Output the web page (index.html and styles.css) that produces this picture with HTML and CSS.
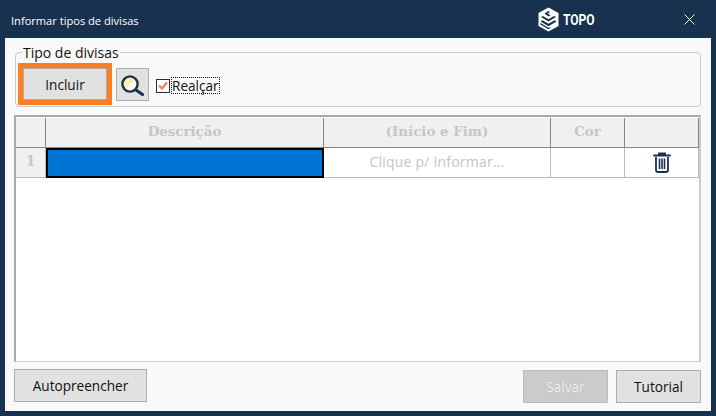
FILE: index.html
```html
<!DOCTYPE html>
<html lang="pt">
<head>
<meta charset="utf-8">
<title>Informar tipos de divisas</title>
<link rel="stylesheet" href="styles.css">
</head>
<body>
<div class="window">
  <header class="titlebar">
    <span class="title">Informar tipos de divisas</span>
    <div class="logo">
      <svg class="logo-mark" width="21" height="25" viewBox="0 0 21 25" aria-hidden="true">
        <path d="M10.5 0.5 L20.5 6 V19 L10.5 24.5 L0.5 19 V6 Z" fill="#fff"/>
        <path d="M10.5 4 L6.5 6.5 L10.5 9.5 L12.5 8.3 L9.8 6.6 L11.8 5.2 Z" fill="#17314f"/>
        <path d="M3 10 L10.5 14.5 L18 10 L16 8.9 L10.5 12.2 L5 8.9 Z" fill="#17314f"/>
        <path d="M4.5 13.3 L2.5 14.4 L10.5 19.2 L18.5 14.4 L16.5 13.3 L10.5 16.8 Z" fill="#17314f"/>
        <path d="M2 17.2 L10.5 22.2 L13.5 20.4 L10.5 20.8 L2.5 16.1 Z" fill="#17314f"/>
      </svg>
      <span class="logo-text">TOPO</span>
    </div>
    <svg class="close" width="11" height="11" viewBox="0 0 11 11" aria-hidden="true">
      <path d="M0.5 0.5 L10.5 10.5 M10.5 0.5 L0.5 10.5" stroke="#fff" stroke-width="1" fill="none"/>
    </svg>
  </header>
  <main class="content">
    <fieldset class="group">
      <legend class="legend">Tipo de divisas</legend>
      <div class="toolbar">
        <div class="highlight"><button class="btn btn-include" type="button">Incluir</button></div>
        <button class="btn btn-search" type="button" aria-label="Buscar">
          <svg width="26" height="26" viewBox="0 0 26 26" aria-hidden="true">
            <circle cx="10" cy="12" r="7.6" fill="#fdeeb4"/>
            <path d="M15.4 6.8 A7.6 7.6 0 0 1 5 17.6 Z" fill="#fffdf2"/>
            <circle cx="10" cy="12" r="7.6" fill="none" stroke="#17314f" stroke-width="2.4"/>
            <path d="M16 18 L22.5 22.5" stroke="#17314f" stroke-width="3.2" stroke-linecap="round"/>
          </svg>
        </button>
        <label class="check">
          <span class="box">
            <svg width="10" height="10" viewBox="0 0 10 10" aria-hidden="true">
              <path d="M1 4.5 L4 7.5 L9 1.5" stroke="#f5804a" stroke-width="2.2" fill="none"/>
            </svg>
          </span>
          <span class="check-label">Realçar</span>
        </label>
      </div>
    </fieldset>
    <section class="grid">
      <div class="row head">
        <div class="cell corner"></div>
        <div class="cell">Descrição</div>
        <div class="cell">(Início e Fim)</div>
        <div class="cell">Cor</div>
        <div class="cell last"></div>
      </div>
      <div class="row body">
        <div class="cell rownum">1</div>
        <div class="cell selected"></div>
        <div class="cell hint">Clique p/ Informar...</div>
        <div class="cell"></div>
        <div class="cell last">
          <svg width="18" height="21" viewBox="0 0 18 21" aria-hidden="true">
            <path d="M6 3 V1.5 H12 V3 M1 3.5 H17" stroke="#17314f" stroke-width="1.8" fill="none" stroke-linecap="round"/>
            <path d="M3 5 V18 Q3 20 5 20 H13 Q15 20 15 18 V5" stroke="#17314f" stroke-width="1.8" fill="none"/>
            <path d="M6.5 6.5 V17 M9 6.5 V17 M11.5 6.5 V17" stroke="#17314f" stroke-width="1.6" fill="none"/>
          </svg>
        </div>
      </div>
    </section>
    <footer class="actions">
      <button class="btn btn-auto" type="button">Autopreencher</button>
      <div class="right">
        <button class="btn btn-foot disabled" type="button" disabled>Salvar</button>
        <button class="btn btn-foot" type="button">Tutorial</button>
      </div>
    </footer>
  </main>
</div>
</body>
</html>
```
FILE: styles.css
```css
* { box-sizing: border-box; }
html, body { margin: 0; padding: 0; }
body { width: 716px; height: 416px; overflow: hidden; background: #17314f; font-family: "Open Sans", "Noto Sans", sans-serif; color: #111; }
.window { width: 716px; height: 416px; display: flex; flex-direction: column; padding: 0 5px 5px; }
.titlebar { height: 38px; display: flex; align-items: center; color: #fff; padding-left: 6px; flex: none; }
.title { font-size: 11.1px; width: 527px; position: relative; top: 1px; }
.logo { display: flex; align-items: center; gap: 4px; width: 146px; margin-top: 1px; }
.logo-text { font-family: "Roboto", sans-serif; font-weight: 700; font-size: 14px; transform: scaleX(0.86); transform-origin: left center; }
.close { flex: none; }
.content { flex: 1; background: #f9f9f9; display: flex; flex-direction: column; padding: 8px 10px 8px 9px; }
.group { margin: 0 0 0 1px; padding: 0 0 0 2px; height: 61px; border: 1px solid #ccc; border-radius: 4px; min-width: 0; flex: none; }
.legend { font-size: 14px; line-height: 13px; padding: 0 1px; margin-left: 4px; color: #111; }
.toolbar { display: flex; align-items: flex-start; gap: 4px; height: 42px; margin-top: 4px; }
.highlight { border: 5px solid #fd7e23; width: 94px; height: 42px; flex: none; }
.btn { font-family: inherit; font-size: 13.6px; color: #111; background: #e1e1e1; border: 1px solid #adadad; padding: 0; }
.btn-include { width: 100%; height: 100%; }
.btn-search { width: 33px; height: 33px; margin-top: 5px; display: flex; align-items: center; justify-content: center; flex: none; }
.check { display: flex; align-items: center; margin: 14px 0 0 3px; gap: 1px; }
.box { width: 14px; height: 14px; border: 1px solid #17314f; background: #fff; display: flex; align-items: center; justify-content: center; }
.check-label { font-size: 13.6px; line-height: 15px; border: 1px dotted #111; height: 17px; }
.grid { margin-top: 8px; height: 247px; flex: none; background: #fff; border: 2px solid #aaa; border-right-color: #ccc; border-bottom-color: #ccc; border-bottom-width: 1px; padding-top: 1px; }
.row { display: grid; grid-template-columns: 30px 278px 227px 74px 74px; }
.head { height: 30px; background: #f0f0f0; border-bottom: 1px solid #868686; }
.head .cell { display: flex; align-items: center; justify-content: center; padding-bottom: 3px; border-right: 1px solid #868686; font-family: "DejaVu Serif", serif; font-weight: 700; font-size: 13.4px; color: #c6c6c6; }
.body { height: 30px; border-bottom: 1px solid #bbb; }
.body .cell { display: flex; align-items: center; justify-content: center; border-right: 1px solid #bbb; }
.body .rownum { background: #f0f0f0; padding-bottom: 3px; font-family: "DejaVu Serif", serif; font-weight: 700; font-size: 14px; color: #c6c6c6; }
.body .selected { background: #0074d4; border: 2px solid #000; margin-bottom: -1px; }
.body .hint { padding-bottom: 3px; font-size: 14px; color: #c4c4c4; letter-spacing: 0.2px; }
.actions { display: flex; justify-content: space-between; align-items: flex-start; margin-top: 7px; }
.btn-auto { width: 133px; height: 33px; }
.right { display: flex; gap: 8px; margin-top: 1px; }
.btn-foot { width: 85px; height: 33px; }
.disabled { background: #cbcbcb; border-color: #bcbcbc; color: #f2f2f2; text-shadow: 0 0 1px #aaa; }
```
